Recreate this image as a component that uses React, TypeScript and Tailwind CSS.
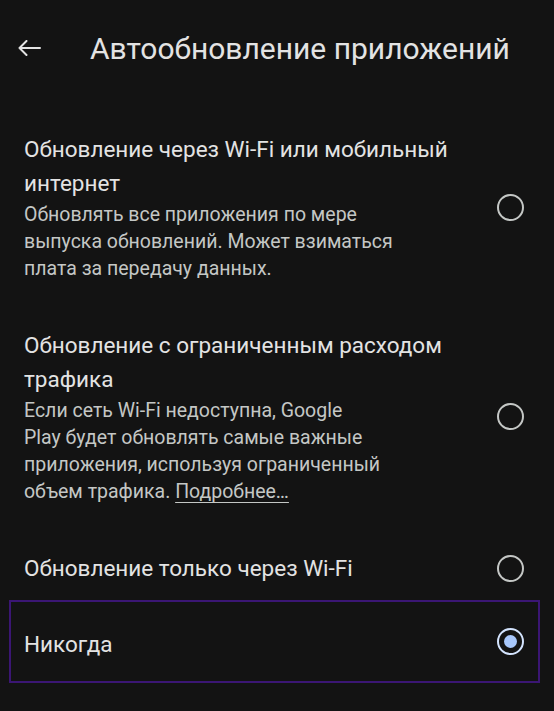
const options = [
    {
        title: "Обновление через Wi-Fi или мобильный интернет",
        lines: [
            "Обновлять все приложения по мере",
            "выпуска обновлений. Может взиматься",
            "плата за передачу данных.",
        ],
        more: false,
    },
    {
        title: "Обновление с ограниченным расходом трафика",
        lines: [
            "Если сеть Wi-Fi недоступна, Google",
            "Play будет обновлять самые важные",
            "приложения, используя ограниченный",
            "объем трафика.",
        ],
        more: true,
    },
];

function Radio({ checked }: { checked?: boolean }) {
    if (checked) {
        return (
            <div className="w-[27px] h-[27px] rounded-full border-2 border-[#d3e3fd] flex items-center justify-center shrink-0">
                <div className="w-[13px] h-[13px] rounded-full bg-[#a8c7fa]" />
            </div>
        );
    }
    return <div className="w-[27px] h-[27px] rounded-full border-2 border-[#c4c7c5] shrink-0" />;
}

export default function App() {
    return (
        <div
            className="w-[554px] h-[711px] bg-[#131313] overflow-hidden"
            style={{ fontFamily: "Roboto, 'Noto Sans', sans-serif" }}
        >
            <div className="flex items-center h-[56px] mt-[20px] pl-[18px]">
                <svg width="23" height="16" viewBox="0 0 23 16" fill="none" stroke="#e3e3e3" strokeWidth="2" strokeLinecap="round" strokeLinejoin="round">
                    <path d="M22 8H1.5M8.5 1L1.5 8l7 7" />
                </svg>
                <h1 className="ml-[49px] text-[30px] text-[#e3e3e3] font-normal">Автообновление приложений</h1>
            </div>

            <div className="mt-[56px] pl-[9px] pr-[14px]">
                {options.map((o) => (
                    <div key={o.title} className="flex items-center pl-[15px] pr-[16px] mb-[46px]">
                        <div className="w-[430px]">
                            <div className="text-[22.5px] leading-[34px] text-[#e3e3e3]">{o.title}</div>
                            <div className="mt-[1px] text-[19.5px] leading-[27px] text-[#c4c7c5]">
                                {o.lines.map((l, i) => (
                                    <div key={i} className="whitespace-nowrap">
                                        {l}
                                        {o.more && i === o.lines.length - 1 && (
                                            <>
                                                {" "}
                                                <span className="underline underline-offset-4">Подробнее…</span>
                                            </>
                                        )}
                                    </div>
                                ))}
                            </div>
                        </div>
                        <div className="flex-1" />
                        <Radio />
                    </div>
                ))}

                <div className="flex items-center pl-[15px] pr-[16px] h-[34px]">
                    <div className="text-[22.5px] leading-[34px] text-[#e3e3e3]">Обновление только через Wi-Fi</div>
                    <div className="flex-1" />
                    <Radio />
                </div>

                <div className="mt-[15px] h-[83px] border-2 border-[#3b1674] flex items-center pl-[13px] pr-[14px]">
                    <div className="text-[22.5px] leading-[34px] text-[#e3e3e3] mt-[4px]">Никогда</div>
                    <div className="flex-1" />
                    <Radio checked />
                </div>
            </div>
        </div>
    );
}
